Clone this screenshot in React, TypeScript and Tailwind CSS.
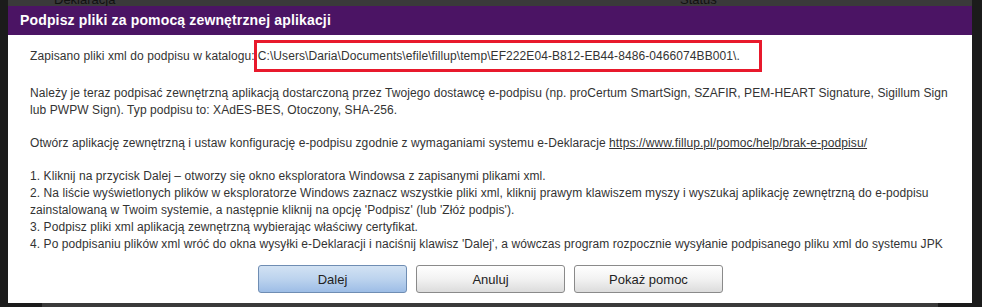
import React from "react";

export default function App() {
  return (
    <div
      className="relative w-[982px] h-[307px] overflow-hidden bg-[#1b1b1b]"
      style={{ fontFamily: '"Liberation Sans", Arial, sans-serif' }}
    >
      {/* background page behind the overlay */}
      <div className="absolute left-[8px] top-0 w-[964px] h-[6px] bg-[#3a3a3a] overflow-hidden">
        <span className="absolute left-[46px] top-[-7px] text-[13px] leading-[14px] text-[#111]">Deklaracja</span>
        <span className="absolute left-[672px] top-[-7px] text-[13px] leading-[14px] text-[#111]">Status</span>
      </div>
      <div className="absolute left-[42px] bottom-0 w-[896px] h-[4px] bg-[#3a3a3a]" />

      {/* dialog */}
      <div className="relative ml-[8px] mt-[6px] w-[964px] h-[297px] bg-white flex flex-col">
        <div className="h-[29px] bg-[#4b1464] flex items-center pl-[12px]">
          <span className="text-white font-bold text-[14px] tracking-[0.15px]">
            Podpisz pliki za pomocą zewnętrznej aplikacji
          </span>
        </div>
        <div className="flex-1 pl-[22px] pr-[10px] pt-[5px] text-[12px] leading-[17px] text-[#333] tracking-[0.08px]">
          <div className="flex items-center h-[32px] whitespace-nowrap">
            <span>Zapisano pliki xml do podpisu w katalogu:</span>
            <span className="ml-[-1px] border-[3px] border-[#e8192c] h-[32px] w-[508px] flex items-center pl-[1px]">
              C:\Users\Daria\Documents\efile\fillup\temp\EF222E04-B812-EB44-8486-0466074BB001\.
            </span>
          </div>
          <div className="mt-[13px] whitespace-nowrap">
            Należy je teraz podpisać zewnętrzną aplikacją dostarczoną przez Twojego dostawcę e-podpisu (np. proCertum SmartSign, SZAFIR, PEM-HEART Signature, Sigillum Sign
            <br />
            lub PWPW Sign). Typ podpisu to: XAdES-BES, Otoczony, SHA-256.
          </div>
          <div className="mt-[16px] whitespace-nowrap">
            Otwórz aplikację zewnętrzną i ustaw konfigurację e-podpisu zgodnie z wymaganiami systemu e-Deklaracje{" "}
            <a className="underline text-[#333]" href="#">
              https://www.fillup.pl/pomoc/help/brak-e-podpisu/
            </a>
          </div>
          <div className="mt-[16px] whitespace-nowrap">
            1. Kliknij na przycisk Dalej – otworzy się okno eksploratora Windowsa z zapisanymi plikami xml.
            <br />
            2. Na liście wyświetlonych plików w eksploratorze Windows zaznacz wszystkie pliki xml, kliknij prawym klawiszem myszy i wyszukaj aplikację zewnętrzną do e-podpisu
            <br />
            zainstalowaną w Twoim systemie, a następnie kliknij na opcję 'Podpisz' (lub 'Złóż podpis').
            <br />
            3. Podpisz pliki xml aplikacją zewnętrzną wybierając właściwy certyfikat.
            <br />
            4. Po podpisaniu plików xml wróć do okna wysyłki e-Deklaracji i naciśnij klawisz 'Dalej', a wówczas program rozpocznie wysyłanie podpisanego pliku xml do systemu JPK
          </div>
          <div className="mt-[12px] flex gap-[9px] pl-[228px] tracking-normal">
            <button className="w-[149px] h-[28px] rounded-[3px] border border-[#6f8db3] bg-gradient-to-b from-[#d2e2f3] via-[#bcd3ee] to-[#9dbde6] text-[13px] text-[#222]">
              Dalej
            </button>
            <button className="w-[149px] h-[28px] rounded-[3px] border border-[#8a8a8a] bg-gradient-to-b from-[#ffffff] via-[#f2f2f2] to-[#dcdcdc] text-[13px] text-[#222]">
              Anuluj
            </button>
            <button className="w-[149px] h-[28px] rounded-[3px] border border-[#8a8a8a] bg-gradient-to-b from-[#ffffff] via-[#f2f2f2] to-[#dcdcdc] text-[13px] text-[#222]">
              Pokaż pomoc
            </button>
          </div>
        </div>
      </div>
    </div>
  );
}
